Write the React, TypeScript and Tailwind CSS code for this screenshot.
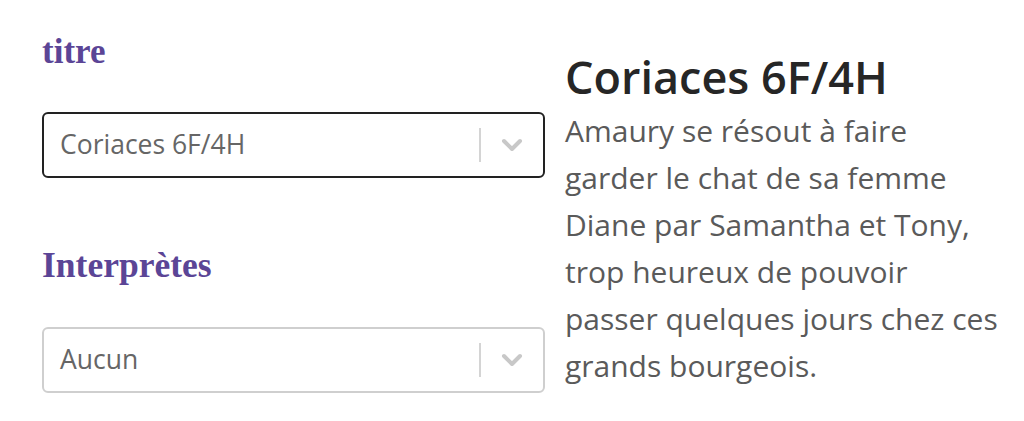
function SelectBox({ value, focused }: { value: string; focused?: boolean }) {
  return (
    <div
      className={
        "flex items-center h-[66px] rounded-md border-2 bg-white " +
        (focused ? "border-[#222]" : "border-[#cfcfcf]")
      }
    >
      <div className="flex-1 pl-4 text-[26.5px] text-[#666]">{value}</div>
      <div className="w-[2px] h-[34px] bg-[#d4d4d4]" />
      <div className="w-[62px] flex justify-center">
        <svg width="22" height="14" viewBox="0 0 22 14" fill="none">
          <path
            d="M3 3l8 8 8-8"
            stroke="#c8c8c8"
            strokeWidth="4"
            strokeLinecap="round"
            strokeLinejoin="round"
          />
        </svg>
      </div>
    </div>
  );
}

export default function App() {
  return (
    <div className="w-[1024px] h-[421px] bg-white flex pl-[42px] font-['Open_Sans',sans-serif] overflow-hidden">
      <div className="w-[503px] pt-[32px]">
        <h2 className="font-['Liberation_Serif',serif] font-bold text-[35px] leading-[40px] text-[#5b4596]">
          titre
        </h2>
        <div className="mt-[40px]">
          <SelectBox value="Coriaces 6F/4H" focused />
        </div>
        <h2 className="mt-[67px] font-['Liberation_Serif',serif] font-bold text-[35.5px] leading-[40px] text-[#5b4596]">
          Interprètes
        </h2>
        <div className="mt-[42px]">
          <SelectBox value="Aucun" />
        </div>
      </div>
      <div className="ml-[20px] pt-[52px]">
        <h1 className="text-[45px] leading-[50px] font-semibold text-[#262626]">Coriaces 6F/4H</h1>
        <p className="mt-[5px] text-[30px] leading-[47px] text-[#5a5a5a] whitespace-nowrap">
          Amaury se résout à faire
          <br />
          garder le chat de sa femme
          <br />
          Diane par Samantha et Tony,
          <br />
          trop heureux de pouvoir
          <br />
          passer quelques jours chez ces
          <br />
          grands bourgeois.
        </p>
      </div>
    </div>
  );
}
